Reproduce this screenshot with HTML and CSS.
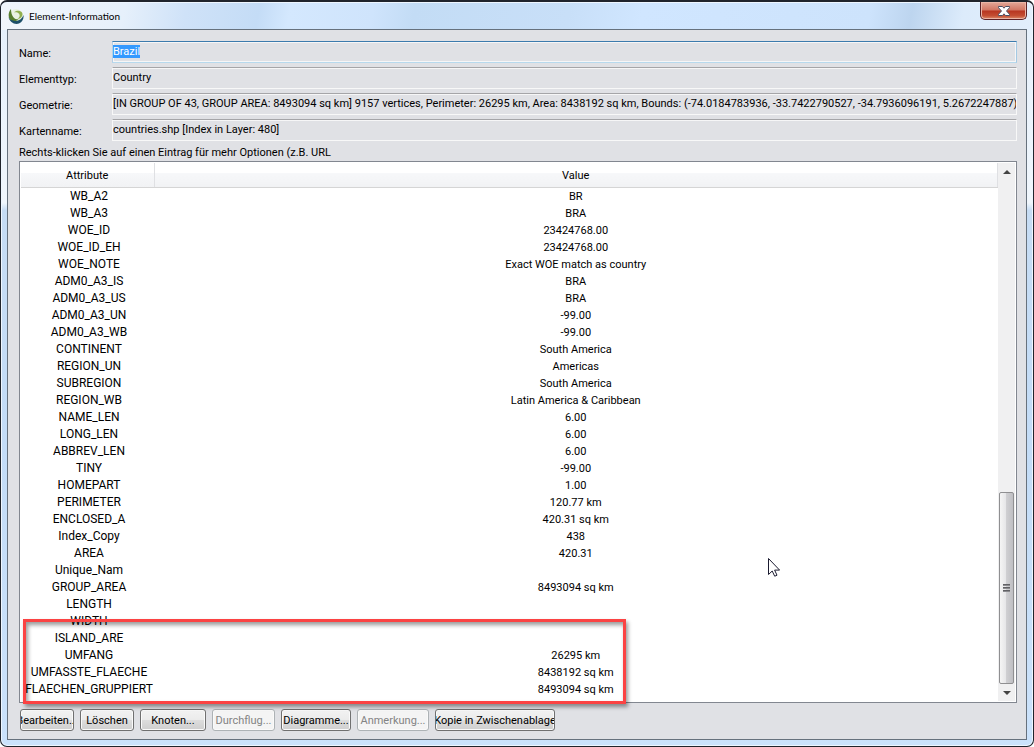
FILE: index.html
```html
<!DOCTYPE html>
<html lang="de">
<head>
<meta charset="utf-8">
<title>Element-Information</title>
<link rel="stylesheet" href="styles.css">
</head>
<body>
<main class="window">
  <header class="titlebar">
    <svg class="logo" viewBox="0 0 16 16" aria-hidden="true">
      <circle cx="8" cy="8" r="7" fill="#e9f1e2"/>
      <path d="M3 1C0 4 0 9.500 2.500 12c2 2 6 1.500 8-.5C6.500 11.500 3 8.500 3 1Z" fill="#567d2e"/>
      <path d="M.5 9c1 5 6 8 10.500 6.500 3.500-1.500 5-5 4.500-8.500-1.500 4.500-6 6.800-9.500 5.800C3.500 12.300 1.500 11.500.5 9Z" fill="#1c4f68"/>
      <path d="M6 4.500c2-2.500 6.500-2 8 0 1.500 2.500-.5 6-4.500 6.500 2-1.500 3-3.500 1.500-5.200C9.500 4.300 8 4.200 6 4.500Z" fill="#8fae4e"/>
    </svg>
    <h1 class="title">Element-Information</h1>
    <button class="close" type="button" aria-label="Schließen">
      <svg viewBox="0 0 12 10" aria-hidden="true"><path d="M.5.500h4L6 2.200 7.500.5h4v1.200L8.500 5l3 3.300v1.200h-4L6 7.800 4.500 9.500h-4V8.300l3-3.300-3-3.300Z" fill="#fff" stroke="#4b4f62"/></svg>
    </button>
  </header>
  <section class="client">
    <form class="fields">
      <label for="name">Name:</label><input id="name" class="field focused" value="Brazil" readonly>
      <label for="type">Elementtyp:</label><input id="type" class="field" value="Country" readonly>
      <label for="geom">Geometrie:</label><input id="geom" class="field" value="[IN GROUP OF 43, GROUP AREA: 8493094 sq km] 9157 vertices, Perimeter: 26295 km, Area: 8438192 sq km, Bounds: (-74.0184783936, -33.7422790527, -34.7936096191, 5.2672247887)" readonly>
      <label for="map">Kartenname:</label><input id="map" class="field" value="countries.shp [Index in Layer: 480]" readonly>
    </form>
    <p class="hint">Rechts-klicken Sie auf einen Eintrag für mehr Optionen (z.B. URL</p>
    <div class="list">
      <table class="table">
        <thead><tr><th class="key">Attribute</th><th>Value</th></tr></thead>
        <tbody>
          <tr><td>WB_A2</td><td>BR</td></tr>
          <tr><td>WB_A3</td><td>BRA</td></tr>
          <tr><td>WOE_ID</td><td>23424768.00</td></tr>
          <tr><td>WOE_ID_EH</td><td>23424768.00</td></tr>
          <tr><td>WOE_NOTE</td><td>Exact WOE match as country</td></tr>
          <tr><td>ADM0_A3_IS</td><td>BRA</td></tr>
          <tr><td>ADM0_A3_US</td><td>BRA</td></tr>
          <tr><td>ADM0_A3_UN</td><td>-99.00</td></tr>
          <tr><td>ADM0_A3_WB</td><td>-99.00</td></tr>
          <tr><td>CONTINENT</td><td>South America</td></tr>
          <tr><td>REGION_UN</td><td>Americas</td></tr>
          <tr><td>SUBREGION</td><td>South America</td></tr>
          <tr><td>REGION_WB</td><td>Latin America &amp; Caribbean</td></tr>
          <tr><td>NAME_LEN</td><td>6.00</td></tr>
          <tr><td>LONG_LEN</td><td>6.00</td></tr>
          <tr><td>ABBREV_LEN</td><td>6.00</td></tr>
          <tr><td>TINY</td><td>-99.00</td></tr>
          <tr><td>HOMEPART</td><td>1.00</td></tr>
          <tr><td>PERIMETER</td><td>120.77 km</td></tr>
          <tr><td>ENCLOSED_A</td><td>420.31 sq km</td></tr>
          <tr><td>Index_Copy</td><td>438</td></tr>
          <tr><td>AREA</td><td>420.31</td></tr>
          <tr><td>Unique_Nam</td><td></td></tr>
          <tr><td>GROUP_AREA</td><td>8493094 sq km</td></tr>
          <tr><td>LENGTH</td><td></td></tr>
          <tr><td>WIDTH</td><td></td></tr>
          <tr><td>ISLAND_ARE</td><td></td></tr>
          <tr><td>UMFANG</td><td>26295 km</td></tr>
          <tr><td>UMFASSTE_FLAECHE</td><td>8438192 sq km</td></tr>
          <tr><td>FLAECHEN_GRUPPIERT</td><td>8493094 sq km</td></tr>
        </tbody>
      </table>
      <div class="scrollbar">
        <button class="arrow" type="button" aria-label="Nach oben"><svg viewBox="0 0 8 4" aria-hidden="true"><path d="M0 4 4 0l4 4Z" fill="#444"/></svg></button>
        <div class="track"><div class="thumb"><i></i><i></i><i></i></div></div>
        <button class="arrow" type="button" aria-label="Nach unten"><svg viewBox="0 0 8 4" aria-hidden="true"><path d="M0 0h8L4 4Z" fill="#444"/></svg></button>
      </div>
      <div class="highlight"></div>
      <svg class="cursor" viewBox="0 0 12 19" aria-hidden="true"><path d="M.5.500v16L4.200 13l2.500 5.200 2.300-1-2.400-5.100h5Z" fill="#fff" stroke="#1b1b30"/></svg>
    </div>
    <div class="actions">
      <button class="btn w54" type="button"><span>Bearbeiten...</span></button>
      <button class="btn w54" type="button"><span>Löschen</span></button>
      <button class="btn w66" type="button"><span>Knoten...</span></button>
      <button class="btn w63" type="button" disabled><span>Durchflug...</span></button>
      <button class="btn w70" type="button"><span>Diagramme...</span></button>
      <button class="btn w72" type="button" disabled><span>Anmerkung...</span></button>
      <button class="btn w120" type="button"><span>Kopie in Zwischenablage</span></button>
    </div>
  </section>
</main>
<script src="dialog.js"></script>
</body>
</html>
```
FILE: dialog.js
```js
// The dialog opens with the name ready to be copied.
const nameField = document.getElementById("name");
nameField.focus();
nameField.select();
```
FILE: styles.css
```css
* { box-sizing: border-box; }
html { background: #fff; }
body {
  margin: 0;
  font: 11px/17px Roboto, "Liberation Sans", sans-serif;
  color: #000;
}
button, input { font: inherit; color: inherit; }
.window {
  display: flex;
  flex-direction: column;
  min-height: 100vh;
  padding: 0 6px 6px;
  border: 1px solid #20242c;
  border-top-width: 2px;
  border-radius: 7px;
  background:
    linear-gradient(100deg, #f1f5fa 0, #e6f0fb 12%, #cfe2f8 18%, #c4dcf6 25%, #d4e8fe 28%, #cfe4fc 36%, #c3dcf5 40%, #c8dff8 55%, #d0e6ff 62%, #cde3fc 84%, #bdd5ef 88%, #dcebfb 93%, #e2eefb 100%) top / 100% 28px no-repeat,
    linear-gradient(#e4effb 0, #f0f6fc 27%, #c6dcf4 28%, #c3dcf7 60%, #cbe2fb 100%);
  box-shadow: inset 0 0 0 1px #eef6ff;
}
.titlebar {
  display: flex;
  align-items: center;
  gap: 5px;
  height: 27px;
}
.logo { width: 16px; height: 16px; margin-left: 1px; }
.title {
  flex: 1;
  margin: 0;
  font: 10px/16px Lato, "Open Sans", sans-serif;
}
.close {
  align-self: flex-start;
  display: flex;
  align-items: center;
  justify-content: center;
  width: 47px;
  height: 18px;
  padding: 0;
  border: 1px solid #5b2126;
  border-top: 0;
  border-radius: 0 0 5px 5px;
  background: linear-gradient(#e4a898, #d17562 48%, #b73520 52%, #c34d32 80%, #dc8a68);
  box-shadow: inset 0 0 0 1px #eab5a6;
}
.close svg { width: 12px; height: 10px; }
.client {
  flex: 1;
  display: flex;
  flex-direction: column;
  padding: 11px 9px 8px 11px;
  border: 1px solid #66717d;
  background: #e0e1e5;
}
.fields {
  display: grid;
  grid-template-columns: 93px 1fr;
  row-gap: 4px;
  align-items: center;
}
.fields label { padding-top: 3px; }
.field {
  width: 100%;
  height: 22px;
  padding: 0 0 2px;
  border: 1px solid #f8f8f8;
  border-top-color: #a5a5a8;
  box-shadow: inset 0 1px #f6f6f7;
  background: transparent;
  outline: 0;
}
.focused { border-color: #3d7bad #a4c9e3 #b7d9ed #b5cfe7; box-shadow: inset 0 0 0 1px #f6f6f7; }
.focused::selection { background: #3399ff; color: #fff; }
.hint { margin: 0; padding: 3px 0 0; }
.list {
  position: relative;
  flex: 1;
  display: flex;
  align-items: stretch;
  padding: 1px;
  border: 1px solid #828790;
  background: #fff;
}
.table {
  flex: 1;
  align-self: flex-start;
  border-collapse: collapse;
  table-layout: fixed;
  text-align: center;
}
th {
  height: 24px;
  padding: 2px 0 0;
  border-right: 1px solid #dfe0e3;
  border-bottom: 1px solid #d5d5d5;
  background: linear-gradient(#fff 40%, #f7f8fa 40%, #f1f2f4);
  font-weight: 400;
}
.key { width: 133px; }
td { height: 17px; padding: 0; white-space: nowrap; }
td:first-child { padding-left: 3px; font-size: 12px; }
.scrollbar {
  display: flex;
  flex-direction: column;
  width: 17px;
  padding: 0 1px;
  background: #f0f0f1;
}
.arrow {
  display: flex;
  align-items: center;
  justify-content: center;
  height: 17px;
  padding: 0;
  border: 0;
  background: transparent;
}
.arrow svg { width: 8px; height: 4px; }
.track { flex: 1; display: flex; flex-direction: column; justify-content: flex-end; }
.thumb {
  display: flex;
  flex-direction: column;
  align-items: center;
  justify-content: center;
  gap: 1px;
  height: 38%;
  border: 1px solid #8f8f91;
  border-radius: 2px;
  background: linear-gradient(90deg, #f5f5f5, #e6e6e8 45%, #cfcfd2 50%, #bfbfc3);
}
.thumb i { width: 7px; height: 2px; background: linear-gradient(#4c4c50, #a0a0a4); }
.highlight {
  position: absolute;
  left: 3px;
  bottom: -2px;
  width: 603px;
  height: 85px;
  border: 3px solid #fb4343;
  box-shadow: 2px 3px 4px #0006, inset 2px 3px 4px #0006;
}
.cursor { position: absolute; left: 748px; top: 396px; width: 12px; height: 19px; }
.actions { display: flex; gap: 6px; padding: 6px 0 0 1px; }
.btn {
  display: flex;
  align-items: center;
  justify-content: center;
  height: 22px;
  padding: 0;
  overflow: hidden;
  white-space: nowrap;
  border: 1px solid #707070;
  border-radius: 3px;
  background: linear-gradient(#f2f2f2, #ebebeb 50%, #dddddd 50%, #cfcfcf);
  box-shadow: inset 0 0 0 1px #fafafa;
}
.btn:disabled { color: #838383; border-color: #adb2b5; background: #f4f4f4; }
.w54 { width: 54px; }
.w63 { width: 63px; }
.w66 { width: 66px; }
.w70 { width: 70px; }
.w72 { width: 72px; }
.w120 { width: 120px; }
```
